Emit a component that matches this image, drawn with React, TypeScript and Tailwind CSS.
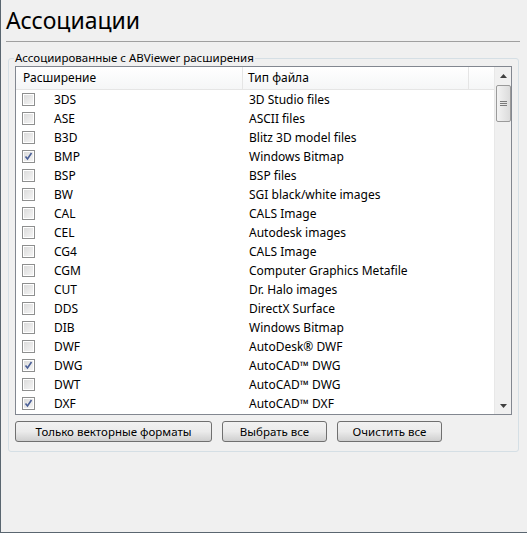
import React from "react";

const rows: [string, string, boolean][] = [
  ["3DS", "3D Studio files", false],
  ["ASE", "ASCII files", false],
  ["B3D", "Blitz 3D model files", false],
  ["BMP", "Windows Bitmap", true],
  ["BSP", "BSP files", false],
  ["BW", "SGI black/white images", false],
  ["CAL", "CALS Image", false],
  ["CEL", "Autodesk images", false],
  ["CG4", "CALS Image", false],
  ["CGM", "Computer Graphics Metafile", false],
  ["CUT", "Dr. Halo images", false],
  ["DDS", "DirectX Surface", false],
  ["DIB", "Windows Bitmap", false],
  ["DWF", "AutoDesk® DWF", false],
  ["DWG", "AutoCAD™ DWG", true],
  ["DWT", "AutoCAD™ DWG", false],
  ["DXF", "AutoCAD™ DXF", true],
];

function Check({ on }: { on: boolean }) {
  return (
    <div className="w-[13px] h-[13px] border border-[#8e8f8f] bg-white p-[1px] shrink-0">
      <div className="w-full h-full bg-gradient-to-br from-[#dcdcdc] to-[#f4f4f4] flex items-center justify-center">
        {on && (
          <svg width="9" height="9" viewBox="0 0 9 9">
            <path d="M1.5 4.5 L3.5 7 L7.5 1" fill="none" stroke="#4a5f97" strokeWidth="1.6" />
          </svg>
        )}
      </div>
    </div>
  );
}

function Btn({ label, w }: { label: string; w: string }) {
  return (
    <div
      className={`${w} h-[21px] rounded-[3px] border border-[#707070] bg-gradient-to-b from-[#f2f2f2] via-[#ebebeb] to-[#cfcfcf] flex items-center justify-center text-[11.5px] text-black`}
    >
      {label}
    </div>
  );
}

export default function App() {
  return (
    <div
      className="w-[527px] h-[533px] bg-[#f0f0f0] border-l border-b border-[#5a6670] flex flex-col"
      style={{ fontFamily: '"Noto Sans", "Liberation Sans", sans-serif' }}
    >
      <div className="h-[41px] pl-[5px] pt-[5px] text-[23px] leading-[30px] text-black">Ассоциации</div>
      <div className="ml-[5px] w-[514px] h-px bg-[#a0a0a0]" />
      <fieldset className="ml-[7px] mt-[9px] w-[510px] h-[401px] border border-[#d5dfe5] rounded-[3px] px-[6px] pb-[6px] flex flex-col">
        <legend className="-ml-[1px] px-px text-[11.5px] leading-[14px] text-black">
          Ассоциированные с ABViewer расширения
        </legend>
        <div className="mt-[1px] w-[497px] h-[349px] shrink-0 border border-[#828790] bg-white flex overflow-hidden">
          <div className="flex-1 flex flex-col overflow-hidden">
            <div className="h-[23px] shrink-0 flex bg-gradient-to-b from-white to-[#f5f6f7] border-b border-[#e5e5e5] text-[12px] text-black">
              <div className="w-[227px] border-r border-[#e5e5e5] pl-[7px] flex items-center">Расширение</div>
              <div className="w-[226px] border-r border-[#e5e5e5] pl-[5px] flex items-center">Тип файла</div>
              <div className="flex-1" />
            </div>
            <div className="flex flex-col">
              {rows.map(([ext, type, on]) => (
                <div key={ext} className="h-[19px] shrink-0 flex items-center text-[12px] text-black">
                  <div className="w-[38px] pl-[6px] flex items-center">
                    <Check on={on} />
                  </div>
                  <div className="w-[195px]">{ext}</div>
                  <div>{type}</div>
                </div>
              ))}
            </div>
          </div>
          <div className="w-[17px] shrink-0 bg-[#f0f0f0] border-l border-[#e8e8e8] flex flex-col items-center">
            <div className="h-[17px] w-full flex items-center justify-center">
              <svg width="7" height="4" viewBox="0 0 7 4">
                <path d="M0 4 L3.5 0 L7 4 Z" fill="#404040" />
              </svg>
            </div>
            <div className="mt-[1px] w-[15px] h-[37px] rounded-[2px] border border-[#9a9a9a] bg-gradient-to-r from-[#f3f3f3] to-[#dcdcdc] flex items-center justify-center">
              <svg width="7" height="7" viewBox="0 0 7 7">
                <path d="M0 1.5 H7 M0 3.5 H7 M0 5.5 H7" stroke="#7a7a7a" strokeWidth="1" />
              </svg>
            </div>
            <div className="flex-1" />
            <div className="h-[17px] w-full flex items-center justify-center">
              <svg width="7" height="4" viewBox="0 0 7 4">
                <path d="M0 0 L3.5 4 L7 0 Z" fill="#404040" />
              </svg>
            </div>
          </div>
        </div>
        <div className="mt-[6px] flex gap-[10px]">
          <Btn label="Только векторные форматы" w="w-[197px]" />
          <Btn label="Выбрать все" w="w-[105px]" />
          <Btn label="Очистить все" w="w-[105px]" />
        </div>
      </fieldset>
    </div>
  );
}
